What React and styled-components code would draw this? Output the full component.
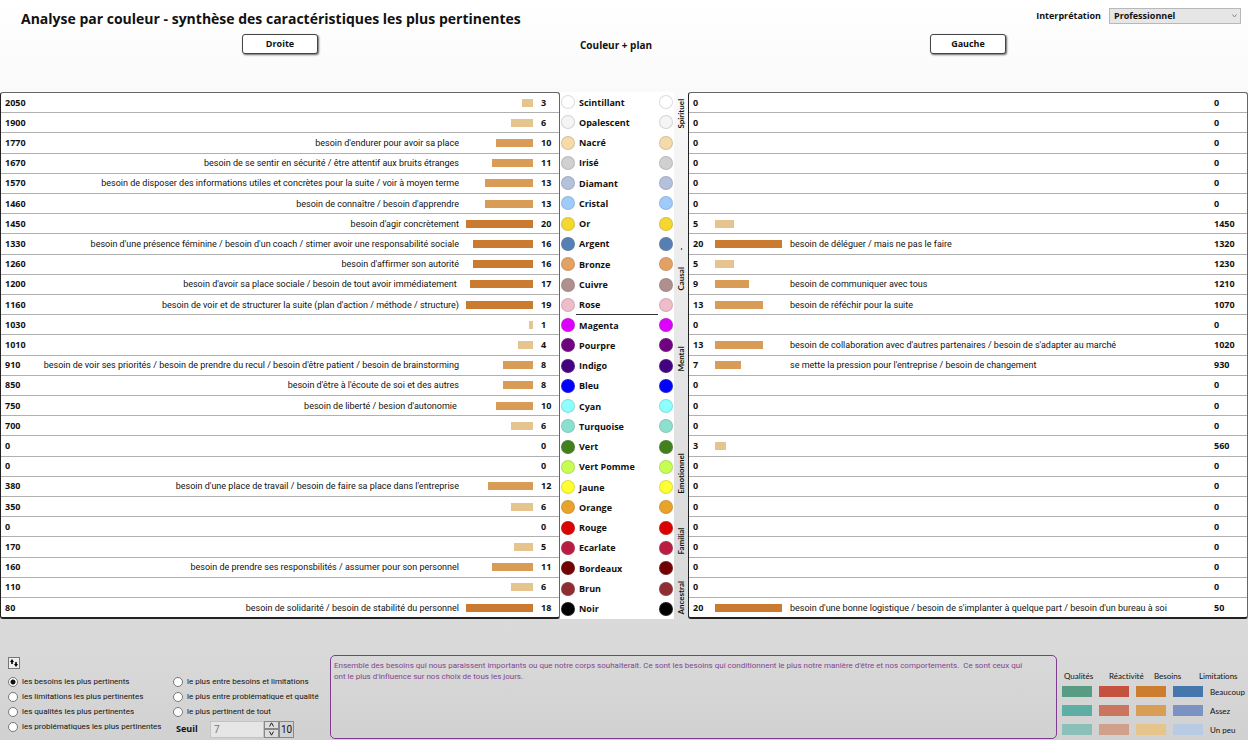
import React, { useState } from 'react';
import styled, { createGlobalStyle } from 'styled-components';

const GlobalStyle = createGlobalStyle`
  * {
    box-sizing: border-box;
  }
  body {
    margin: 0;
    min-height: 100vh;
    background: linear-gradient(#ffffff 0%, #fafafa 12%, #ececec 37%, #dedede 65%, #d9d9d9 88%, #d1d1d1 100%);
    color: #111;
    font-family: "Open Sans", "Noto Sans", sans-serif;
    font-size: 9px;
    line-height: 12px;
    font-variant-ligatures: none;
  }
  button, input, select {
    font: inherit;
    color: inherit;
    margin: 0;
  }
`

const Page = styled.div`
  display: flex;
  flex-direction: column;
  min-height: 100vh;
`

const TopBar = styled.header`
  display: flex;
  justify-content: space-between;
  padding: 8px 7px 0 21px;
  height: 34px;
`

const Title = styled.h1`
  margin: 0;
  font-size: 14px;
  line-height: 22px;
  font-weight: 700;
`

const Interpretation = styled.div`
  display: flex;
  gap: 8px;
  height: 16px;
  line-height: 16px;
  font-weight: 700;
`

const SelectBox = styled.div`
  position: relative;
  width: 132px;
  height: 16px;

  svg {
    position: absolute;
    right: 4px;
    top: 6px;
  }
`

const Select = styled.select`
  appearance: none;
  width: 100%;
  height: 16px;
  padding: 0 4px;
  border: 1px solid #b8b8b8;
  border-radius: 0;
  background: #e6e6e6;
  font-weight: 700;
  line-height: 14px;
`

const Columns = styled.div`
  display: grid;
  grid-template-columns: 1fr 128px 1fr;
`

const Heads = styled(Columns)`
  height: 58px;
  align-items: start;
  justify-items: center;
`

const SideButton = styled.button`
  width: 76px;
  height: 20px;
  padding: 0;
  border: 1px solid #444;
  border-radius: 3px;
  background: #fff;
  box-shadow: 1px 1px 2px rgba(0, 0, 0, 0.6);
  font-weight: 700;
`

const MiddleHead = styled.h2`
  justify-self: start;
  margin: 0;
  padding-left: 20px;
  font-size: 10px;
  line-height: 22px;
`

const SideTable = styled.table`
  width: 100%;
  height: 527px;
  table-layout: fixed;
  border-spacing: 0;
  border: 1px solid #666;
  border-bottom: 2px solid #222;
  border-left-color: #222;
  border-radius: 3px;
  background: #fff;

  td {
    padding: 0;
    border-bottom: 1px solid #b0b0b0;
    white-space: nowrap;
  }
  tr:last-child td {
    border-bottom: 0;
  }
`

const Num = styled.td`
  font-weight: 700;
  && {
    padding-left: ${(props) => props.$pad || 0}px;
  }
`

const Need = styled.td`
  overflow: hidden;
  font-family: Roboto, "Open Sans", sans-serif;
  text-align: ${(props) => props.$align};
`

const Track = styled.div`
  display: flex;
  justify-content: ${(props) => (props.$side === 'left' ? 'flex-end' : 'flex-start')};
  width: 67px;
  height: 8px;
`

const Bar = styled.div`
  background: ${(props) => props.$color};
`

const Middle = styled.div`
  display: grid;
  grid-template-columns: 1fr 14px;
`

const ColorTable = styled.table`
  width: 100%;
  height: 527px;
  border-spacing: 0;
  background: #fff;
  font-weight: 700;

  td {
    padding: 0;
    white-space: nowrap;
  }
`

const NameCell = styled.td`
  border-bottom: 1px solid ${(props) => (props.$line ? '#333' : 'transparent')};
  && {
    padding: 2px 0 0 3px;
  }
`

const Dot = styled.div`
  width: 14px;
  height: 14px;
  margin-left: 1px;
  border-radius: 50%;
  border: 1px solid rgba(120, 120, 120, 0.25);
  background: ${(props) => props.$color};
`

const Plans = styled.div`
  display: grid;
  grid-template-rows: repeat(26, 1fr);
  height: 527px;
`

const Plan = styled.span`
  grid-row: ${(props) => props.$rows};
  writing-mode: vertical-rl;
  transform: rotate(180deg);
  padding-top: 4px;
  font-family: Lato, "Open Sans", sans-serif;
  font-size: 8px;
  line-height: 14px;
  font-weight: 700;
`

const Footer = styled.footer`
  display: grid;
  grid-template-columns: 322px 1fr 191px;
  padding: 36px 0 1px 8px;
  flex: 1;
  font-family: Roboto, "Open Sans", sans-serif;
  font-size: 8px;
`

const Options = styled.div`
  display: flex;
  flex-direction: column;
  align-items: flex-start;
  padding-top: 2px;
`

const SortButton = styled.button`
  display: flex;
  width: 12px;
  height: 12px;
  margin-bottom: 5px;
  padding: 0;
  border: 1px solid #777;
  background: #eee;
`

const Choices = styled.div`
  display: grid;
  grid-template-columns: 165px auto;
  grid-auto-rows: 15px;
`

const Choice = styled.label`
  display: flex;
  align-items: center;
  gap: 4px;
  white-space: nowrap;
`

const Radio = styled.input`
  appearance: none;
  flex: none;
  width: 10px;
  height: 10px;
  border: 1px solid #777;
  border-radius: 50%;
  background: #fff;

  &:checked {
    background: radial-gradient(#111 2px, #fff 3px);
  }
`

const Threshold = styled.div`
  display: flex;
  align-items: center;
  height: 20px;
  padding-left: 3px;
`

const ThresholdLabel = styled.label`
  width: 34px;
  font-family: "Open Sans", sans-serif;
  font-weight: 700;
  font-size: 9px;
`

const ThresholdInput = styled.input`
  width: 54px;
  height: 17px;
  padding: 0 3px;
  border: 1px solid #c4c4c4;
  background: #e6e6e6;
  color: #777;
  font-size: 10px;
`

const Spinner = styled.div`
  display: grid;
  grid-template-rows: 1fr 1fr;
  width: 15px;
  height: 17px;
`

const Step = styled.button`
  display: flex;
  align-items: center;
  justify-content: center;
  padding: 0;
  border: 1px solid #888;
  background: #ddd;
`

const Max = styled.output`
  width: 15px;
  height: 17px;
  border: 1px solid #888;
  text-align: center;
  font-size: 10px;
  line-height: 16px;
`

const Description = styled.p`
  margin: 0;
  padding: 4px 24px 4px 3px;
  border: 1px solid #7d3c8c;
  border-radius: 5px;
  color: #83458f;
  line-height: 11px;
`

const Legend = styled.div`
  padding: 16px 0 0 5px;
  font-family: Lato, "Open Sans", sans-serif;
`

const LegendHead = styled.div`
  display: grid;
  grid-template-columns: 45px 45px 45px auto;
  padding-left: 2px;
  line-height: 11px;
`

const LegendRow = styled.div`
  display: grid;
  grid-template-columns: repeat(4, 30px) auto;
  column-gap: 7px;
  align-items: center;
  height: 19px;
  white-space: nowrap;
`

const Swatch = styled.div`
  height: 11px;
  background: ${(props) => props.$color};
`

// name, colour, left [total, need, score], right [score, need, total]
const rows = [
  ['Scintillant', '#ffffff', [2050, '', 3], [0, '', 0]],
  ['Opalescent', '#f5f5f5', [1900, '', 6], [0, '', 0]],
  ['Nacré', '#f5dba8', [1770, "besoin d'endurer pour avoir sa place", 10], [0, '', 0]],
  ['Irisé', '#d0d0d0', [1670, 'besoin de se sentir en sécurité / être attentif aux bruits étranges', 11], [0, '', 0]],
  ['Diamant', '#b3c1dc', [1570, 'besoin de disposer des informations utiles et concrètes pour la suite / voir à moyen terme', 13], [0, '', 0]],
  ['Cristal', '#9fcbfa', [1460, "besoin de connaître / besoin d'apprendre", 13], [0, '', 0]],
  ['Or', '#f5d82e', [1450, "besoin d'agir concrètement", 20], [5, '', 1450]],
  ['Argent', '#5680b4', [1330, "besoin d'une présence féminine / besoin d'un coach / stimer avoir une responsabilité sociale", 16], [20, 'besoin de déléguer / mais ne pas le faire', 1320]],
  ['Bronze', '#e3a263', [1260, "besoin d'affirmer son autorité", 16], [5, '', 1230]],
  ['Cuivre', '#b08f8f', [1200, "besoin d'avoir sa place sociale / besoin de tout avoir immédiatement\u00a0", 17], [9, 'besoin de communiquer avec tous', 1210]],
  ['Rose', '#efbccb', [1160, "besoin de voir et de structurer la suite (plan d'action / méthode / structure)", 19], [13, 'besoin de réféchir pour la suite', 1070]],
  ['Magenta', '#dd00ff', [1030, '', 1], [0, '', 0]],
  ['Pourpre', '#6f0080', [1010, '', 4], [13, "besoin de collaboration avec d'autres partenaires / besoin de s'adapter au marché", 1020]],
  ['Indigo', '#43007f', [910, "besoin de voir ses priorités / besoin de prendre du recul / besoin d'être patient / besoin de brainstorming", 8], [7, "se mette la pression pour l'entreprise / besoin de changement", 930]],
  ['Bleu', '#0000ff', [850, "besoin d'être à l'écoute de soi et des autres", 8], [0, '', 0]],
  ['Cyan', '#8cffff', [750, "besoin de liberté / besion d'autonomie\u00a0", 10], [0, '', 0]],
  ['Turquoise', '#8ce0d0', [700, '', 6], [0, '', 0]],
  ['Vert', '#42801e', [0, '', 0], [3, '', 560]],
  ['Vert Pomme', '#c6ff52', [0, '', 0], [0, '', 0]],
  ['Jaune', '#ffff32', [380, "besoin d'une place de travail / besoin de faire sa place dans l'entreprise", 12], [0, '', 0]],
  ['Orange', '#e8a32a', [350, '', 6], [0, '', 0]],
  ['Rouge', '#dc0000', [0, '', 0], [0, '', 0]],
  ['Ecarlate', '#bb1c42', [170, '', 5], [0, '', 0]],
  ['Bordeaux', '#730000', [160, 'besoin de prendre ses responsbilités / assumer pour son personnel', 11], [0, '', 0]],
  ['Brun', '#8e2e32', [110, '', 6], [0, '', 0]],
  ['Noir', '#000000', [80, 'besoin de solidarité / besoin de stabilité du personnel', 18], [20, "besoin d'une bonne logistique / besoin de s'implanter à quelque part / besoin d'un bureau à soi", 50]],
];

const plans = [
  ['Spirituel', '1 / 3'],
  ['-', '7 / 9'],
  ['Causal', '9 / 11'],
  ['Mental', '13 / 15'],
  ['Emotionnel', '18 / 21'],
  ['Familial', '22 / 24'],
  ['Ancestral', '25 / 27'],
];

const choices = [
  ['les besoins les plus pertinents', 'le plus entre besoins et limitations'],
  ['les limitations les plus pertinentes', 'le plus entre problématique et qualité'],
  ['les qualités les plus pertinentes', 'le plus pertinent de tout'],
];

const legend = [
  ['Beaucoup', ['#589c84', '#c4523f', '#cd7d2f', '#4577ac']],
  ['Assez', ['#5eaea5', '#cb755e', '#d89e56', '#7b93c2']],
  ['Un peu', ['#8bc0b8', '#d0a08b', '#e6c58c', '#b7cbe2']],
];

function barColor(score) {
  if (score >= 16) return '#cb7b30';
  if (score >= 7) return '#d89c57';
  return '#e6c48f';
}

function ScoreBar(props) {
  return (
    <Track $side={props.side}>
      <Bar
        $color={barColor(props.score)}
        style={{ width: `${Math.min(props.score / 18, 1) * 100}%` }}
      />
    </Track>
  )
}

function RadioChoice(props) {
  return (
    <Choice>
      <Radio
        type="radio"
        name="filter"
        checked={props.selected === props.label}
        onChange={() => props.onSelect(props.label)}
      />
      {props.label}
    </Choice>
  )
}

function LeftTable() {
  return (
    <SideTable>
      <colgroup>
        <col width="36" />
        <col />
        <col width="74" />
        <col width="26" />
      </colgroup>
      <tbody>
        {rows.map(([name, , [total, need, score]]) => (
          <tr key={name}>
            <Num $pad={4}>{total}</Num>
            <Need $align="right">{need}</Need>
            <td align="right"><ScoreBar side="left" score={score} /></td>
            <Num $pad={8}>{score}</Num>
          </tr>
        ))}
      </tbody>
    </SideTable>
  )
}

function RightTable() {
  return (
    <SideTable>
      <colgroup>
        <col width="26" />
        <col width="75" />
        <col />
        <col width="33" />
      </colgroup>
      <tbody>
        {rows.map(([name, , , [score, need, total]]) => (
          <tr key={name}>
            <Num $pad={4}>{score}</Num>
            <td><ScoreBar side="right" score={score} /></td>
            <Need $align="left">{need}</Need>
            <Num>{total}</Num>
          </tr>
        ))}
      </tbody>
    </SideTable>
  )
}

function ColorColumn() {
  return (
    <Middle>
      <ColorTable>
        <tbody>
          {rows.map(([name, color]) => (
            <tr key={name}>
              <td width="16"><Dot $color={color} /></td>
              <NameCell $line={name === 'Rose'}>{name}</NameCell>
              <td width="16"><Dot $color={color} /></td>
            </tr>
          ))}
        </tbody>
      </ColorTable>
      <Plans>
        {plans.map(([label, span]) => (
          <Plan key={label} $rows={span}>{label}</Plan>
        ))}
      </Plans>
    </Middle>
  )
}

function App() {
  const [selected, setSelected] = useState(choices[0][0]);
  const [threshold, setThreshold] = useState(7);

  return (
    <Page>
      <GlobalStyle />
      <TopBar>
        <Title>Analyse par couleur - synthèse des caractéristiques les plus pertinentes</Title>
        <Interpretation>
          <label htmlFor="interpretation">Interprétation</label>
          <SelectBox>
            <Select id="interpretation">
              <option>Professionnel</option>
            </Select>
            <svg width="5" height="4" viewBox="0 0 5 4">
              <path d="M0.5 0.5L2.5 3L4.5 0.5" fill="none" stroke="#888" />
            </svg>
          </SelectBox>
        </Interpretation>
      </TopBar>
      <Heads>
        <SideButton>Droite</SideButton>
        <MiddleHead>Couleur + plan</MiddleHead>
        <SideButton>Gauche</SideButton>
      </Heads>
      <Columns>
        <LeftTable />
        <ColorColumn />
        <RightTable />
      </Columns>
      <Footer>
        <Options>
          <SortButton aria-label="Trier">
            <svg width="10" height="10" viewBox="0 0 10 10">
              <path d="M3 6V3M7 4V7" fill="none" stroke="#000" strokeWidth="1.6" />
              <path d="M1 4L3 1L5 4ZM5 6L7 9L9 6Z" fill="#000" />
            </svg>
          </SortButton>
          <Choices>
            {choices.flat().map((label) => (
              <RadioChoice key={label} label={label} selected={selected} onSelect={setSelected} />
            ))}
            <RadioChoice label="les problématiques les plus pertinentes" selected={selected} onSelect={setSelected} />
            <Threshold>
              <ThresholdLabel htmlFor="seuil">Seuil</ThresholdLabel>
              <ThresholdInput
                id="seuil"
                value={threshold}
                onChange={(e) => setThreshold(Number(e.target.value) || 0)}
              />
              <Spinner>
                <Step aria-label="Augmenter" onClick={() => setThreshold(threshold + 1)}>
                  <svg width="7" height="5" viewBox="0 0 7 5">
                    <path d="M1.5 4.5L3.5 0.8L5.5 4.5" fill="none" stroke="#222" />
                  </svg>
                </Step>
                <Step aria-label="Diminuer" onClick={() => setThreshold(threshold - 1)}>
                  <svg width="7" height="5" viewBox="0 0 7 5">
                    <path d="M1.5 0.5L3.5 4.2L5.5 0.5" fill="none" stroke="#222" />
                  </svg>
                </Step>
              </Spinner>
              <Max>10</Max>
            </Threshold>
          </Choices>
        </Options>
        <Description>
          Ensemble des besoins qui nous paraissent importants ou que notre corps souhaiterait. Ce sont les besoins qui conditionnent le plus notre manière d'être et nos comportements.&nbsp; Ce sont ceux qui ont le plus d'influence sur nos choix de tous les jours.
        </Description>
        <Legend>
          <LegendHead>
            <span>Qualités</span>
            <span>Réactivité</span>
            <span>Besoins</span>
            <span>Limitations</span>
          </LegendHead>
          {legend.map(([label, colors]) => (
            <LegendRow key={label}>
              {colors.map((color) => (
                <Swatch key={color} $color={color} />
              ))}
              <span>{label}</span>
            </LegendRow>
          ))}
        </Legend>
      </Footer>
    </Page>
  )
}

export default App;
